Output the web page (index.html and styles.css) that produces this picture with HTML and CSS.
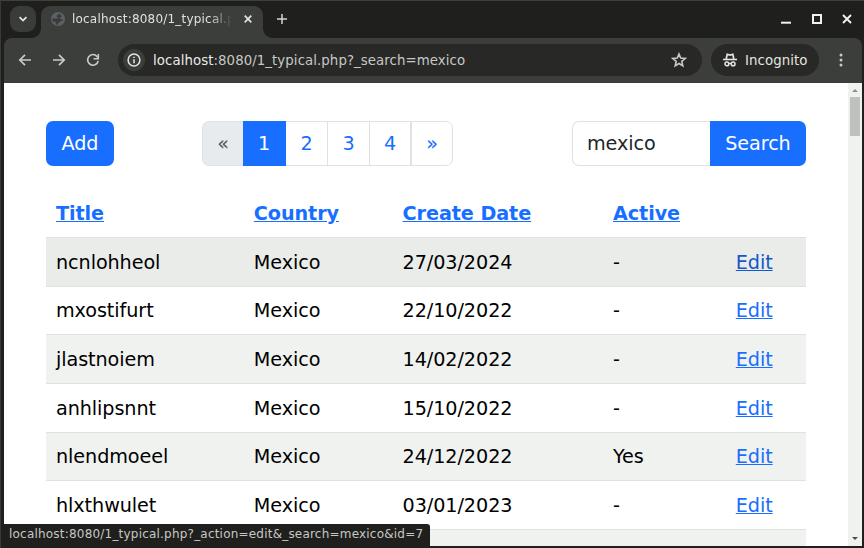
FILE: index.html
```html
<!DOCTYPE html>
<html lang="en">
<head>
<meta charset="utf-8">
<title>localhost:8080/1_typical.php</title>
<link rel="stylesheet" href="styles.css">
</head>
<body>
<div class="window">
  <header class="tabstrip">
    <button class="tab-search" aria-label="Search tabs"><svg width="10" height="10" viewBox="0 0 10 10"><path d="M1.600 3.200 5 6.600 8.400 3.200" fill="none" stroke="#e3e5e1" stroke-width="1.800"/></svg></button>
    <div class="tab">
      <svg class="globe" width="14" height="14" viewBox="0 0 14 14"><circle cx="7" cy="7" r="7" fill="#5c6166"/><path d="M8 1.400C7.200 3 5.700 2.800 5.500 4.400c1.200.5 1.500 1.200 1.100 2H1.400c-.2 1.200.1 2.400.7 3.400h2.700v2.500c.8.400 1.700.5 2.500.3V10.400h1.800V8.900h2.500V7.500l-1.300-.5H9V5.200h1.500V3.500z" fill="#393c39"/></svg>
      <span class="tab-title">localhost:8080/1_typical.p</span>
      <svg class="tab-close" width="8" height="8" viewBox="0 0 8 8"><path d="m.7.7 6.600 6.600M7.300.7.7 7.300" stroke="#e3e5e1" stroke-width="1.700"/></svg>
    </div>
    <svg class="new-tab" width="10" height="10" viewBox="0 0 10 10"><path d="M5 0v10M0 5h10" stroke="#d5d7d3" stroke-width="1.500"/></svg>
    <div class="controls">
      <svg width="10" height="10" viewBox="0 0 10 10"><path d="M0 8.700h10" stroke="#f0f2ee" stroke-width="2"/></svg>
      <svg width="10" height="10" viewBox="0 0 10 10"><path d="M1 1h8v8H1z" fill="none" stroke="#f0f2ee" stroke-width="2"/></svg>
      <svg width="10" height="10" viewBox="0 0 10 10"><path d="m1 1 8 8M9 1 1 9" stroke="#f0f2ee" stroke-width="1.900"/></svg>
    </div>
  </header>
  <nav class="toolbar">
    <svg class="nav-icon" width="14" height="14" viewBox="0 0 14 14"><path d="M13 7H2M7 1.800 1.800 7 7 12.200" fill="none" stroke="#c8cac6" stroke-width="1.700"/></svg>
    <svg class="nav-icon" width="14" height="14" viewBox="0 0 14 14"><path d="M1 7h11M7 1.800 12.200 7 7 12.200" fill="none" stroke="#c8cac6" stroke-width="1.700"/></svg>
    <svg class="nav-icon" width="14" height="14" viewBox="0 0 14 14"><path d="M12.200 7.800A5.300 5.300 0 1 1 11 3.400L12 4.600" fill="none" stroke="#c8cac6" stroke-width="1.600"/><path d="M12.300 1v4.800H7.600" fill="none" stroke="#c8cac6" stroke-width="1.600"/></svg>
    <div class="omnibox">
      <span class="info"><svg width="14" height="14" viewBox="0 0 14 14"><circle cx="7" cy="7" r="5.900" fill="none" stroke="#e3e5e1" stroke-width="1.500"/><path d="M7 6.200v4M7 3.700v1.400" stroke="#e3e5e1" stroke-width="1.500"/></svg></span>
      <span class="url"><b>localhost</b>:8080/1_typical.php?_search=mexico</span>
      <svg class="star" width="16" height="16" viewBox="0 0 16 16"><path d="m8 2 1.700 4.100 4.500.4-3.400 2.900 1 4.400L8 11.500l-3.800 2.300 1-4.400-3.400-2.900 4.500-.4z" fill="none" stroke="#c8cac6" stroke-width="1.600"/></svg>
    </div>
    <div class="incognito">
      <svg width="14" height="14" viewBox="0 0 14 14"><path d="M0 6.500h14" stroke="#e3e5e1" stroke-width="1.600"/><path d="M3.200 6 4.200 1.300 7 2l2.800-.7 1 4.700" fill="none" stroke="#e3e5e1" stroke-width="1.700"/><circle cx="3.900" cy="10.900" r="1.900" fill="none" stroke="#e3e5e1" stroke-width="1.500"/><circle cx="10.100" cy="10.900" r="1.900" fill="none" stroke="#e3e5e1" stroke-width="1.500"/><path d="M5.600 10.700q1.400-.7 2.800 0" fill="none" stroke="#e3e5e1" stroke-width="1.300"/></svg>
      <span>Incognito</span>
    </div>
    <svg class="menu" width="4" height="14" viewBox="0 0 4 14"><g fill="#c8cac6"><circle cx="2" cy="2" r="1.500"/><circle cx="2" cy="7" r="1.500"/><circle cx="2" cy="12" r="1.500"/></g></svg>
  </nav>
  <div class="viewport">
    <main class="page">
      <div class="actions">
        <a class="btn add">Add</a>
        <div class="pagination"><span class="disabled">«</span><a class="active">1</a><a>2</a><a>3</a><a class="last">4</a><a class="next">»</a></div>
        <form class="search"><input type="text" value="mexico" aria-label="Search"><button type="button" class="btn">Search</button></form>
      </div>
      <div class="table">
        <div class="row head"><a>Title</a><a>Country</a><a>Create Date</a><a>Active</a><span></span></div>
        <div class="row hover"><span>ncnlohheol</span><span>Mexico</span><span>27/03/2024</span><span>-</span><a>Edit</a></div>
        <div class="row"><span>mxostifurt</span><span>Mexico</span><span>22/10/2022</span><span>-</span><a>Edit</a></div>
        <div class="row odd"><span>jlastnoiem</span><span>Mexico</span><span>14/02/2022</span><span>-</span><a>Edit</a></div>
        <div class="row"><span>anhlipsnnt</span><span>Mexico</span><span>15/10/2022</span><span>-</span><a>Edit</a></div>
        <div class="row odd"><span>nlendmoeel</span><span>Mexico</span><span>24/12/2022</span><span>Yes</span><a>Edit</a></div>
        <div class="row"><span>hlxthwulet</span><span>Mexico</span><span>03/01/2023</span><span>-</span><a>Edit</a></div>
        <div class="row odd"></div>
      </div>
    </main>
    <div class="scrollbar">
      <svg width="6" height="3" viewBox="0 0 6 3"><path d="M0 3 3 0l3 3z" fill="#8d908d"/></svg>
      <div class="thumb"></div>
      <svg class="down" width="6" height="3" viewBox="0 0 6 3"><path d="M0 0h6L3 3z" fill="#4b4d4b"/></svg>
    </div>
    <div class="status">localhost:8080/1_typical.php?_action=edit&amp;_search=mexico&amp;id=7</div>
  </div>
</div>
</body>
</html>
```
FILE: styles.css
```css
* { box-sizing: border-box; }
body { margin: 0; overflow: hidden; font-family: "DejaVu Sans", sans-serif; }
svg { display: block; flex: none; }
button, input { font: inherit; letter-spacing: inherit; border: 0; margin: 0; }
.window {
  width: 864px; height: 548px; display: flex; flex-direction: column;
  background: #1f1f1d; border-top: 1px solid #3e403e; border-left: 1px solid #383a38;
  padding: 0 2px 2px 3px;
}
.tabstrip { height: 37px; flex: none; display: flex; padding: 5px 10px 0 6px; }
.tab-search {
  width: 26px; height: 26px; border-radius: 9px; background: #393c39; padding: 0;
  display: flex; align-items: center; justify-content: center;
}
.tab {
  position: relative; width: 222px; height: 32px; margin-left: 5px; padding: 0 11px 6px 10px;
  background: #3c3e3c; border-radius: 9px 9px 0 0; display: flex; align-items: center;
}
.tab::before, .tab::after {
  content: ""; position: absolute; bottom: 0; width: 9px; height: 9px;
}
.tab::before { left: -9px; background: radial-gradient(circle at 0 0, transparent 8.500px, #3c3e3c 9px); }
.tab::after { right: -9px; background: radial-gradient(circle at 100% 0, transparent 8.500px, #3c3e3c 9px); }
.tab-title {
  width: 166px; margin-left: 7px; white-space: nowrap; font-size: 12px; letter-spacing: .2px; color: #dfe1dd;
  mask-image: linear-gradient(to right, #000 138px, transparent 160px);
}
.tab-close { margin-left: auto; }
.new-tab { margin: 8px 0 0 14px; }
.controls { margin: 8px 0 0 auto; display: flex; gap: 20.500px; }
.toolbar {
  height: 45px; flex: none; display: flex; align-items: center; background: #3c3e3c;
  border-radius: 8px 8px 0 0; padding: 0 19px 1px 14px; color: #e3e5e1;
}
.nav-icon { margin-right: 20px; }
.omnibox {
  width: 584px; height: 32px; border-radius: 16px; background: #282826; margin-left: -2px;
  display: flex; align-items: center; padding: 0 15px 0 5px;
}
.info {
  width: 22px; height: 22px; border-radius: 50%; background: #3c3e3c;
  display: flex; align-items: center; justify-content: center;
}
.url { margin-left: 8px; font-size: 13.330px; letter-spacing: .07px; color: #c6c8c4; white-space: nowrap; }
.url b { font-weight: 400; color: #e8eae6; }
.star { margin-left: auto; }
.incognito {
  width: 108px; height: 32px; margin-left: 9px; border-radius: 16px; background: #282826;
  display: flex; align-items: center; padding-left: 12px; gap: 8px; font-size: 13.330px; letter-spacing: .07px;
}
.menu { margin-left: auto; }
.viewport { position: relative; flex: 1; min-height: 0; display: flex; background: #fff; overflow: hidden; }
.page { flex: 1; padding: 38px 42px 0; font-size: 19.200px; letter-spacing: -.08px; line-height: 28.800px; color: #000; }
.actions { display: flex; height: 45px; justify-content: space-between; }
.btn {
  background: #186eff; color: #fff; display: flex; align-items: center; justify-content: center;
  border-radius: 7px; padding: 2px 0 0;
}
.add { width: 68px; }
.pagination { display: flex; width: 251px; margin-left: -31px; color: #186eff; border-radius: 7px; }
.pagination > * {
  flex: none; width: 42px; border: solid #dee2e4; border-width: 1px 1px 1px 0; padding-top: 2px;
  display: flex; align-items: center; justify-content: center;
}
.pagination .disabled { width: 41px; background: #e8ebed; color: #55595b; border-width: 1px 0 1px 1px; border-radius: 7px 0 0 7px; }
.pagination .active { width: 43px; background: #186eff; border-color: #186eff; color: #fff; }
.pagination .last { width: 41px; }
.pagination .next { border-left-width: 1px; border-radius: 0 7px 7px 0; }
.search { width: 234px; display: flex; }
.search input {
  width: 138px; border: 1px solid #dee2e4; border-right: 0; border-radius: 7px 0 0 7px;
  padding: 2px 14px 0; color: #212528; outline: 0;
}
.search .btn { width: 96px; border-radius: 0 7px 7px 0; }
.table { margin-top: 23px; }
.row {
  height: 48.700px; display: grid; grid-template-columns: 197.800px 148.800px 210.400px 122.800px 1fr;
  align-items: center; padding: 2.600px 0 0 10px; border-bottom: 1px solid #dee2e4;
}
.row a { color: #186eff; text-decoration: underline; justify-self: start; }
.row.head { font-weight: 700; height: 49px; padding-top: 2px; }
.row.odd { background: #f0f2ef; }
.row.hover { background: #eaece9; }
.row.hover a { color: #1358cc; }
.scrollbar { width: 14px; background: #f0f2ef; display: flex; flex-direction: column; align-items: center; padding: 6px 0; }
.thumb { width: 10px; height: 39px; margin-top: 5px; background: #bfc1be; }
.down { margin-top: auto; }
.status {
  position: absolute; left: 0; bottom: 0; width: 426px; height: 22px; padding-left: 5px;
  background: #1f1f1d; border-radius: 0 3px 0 0; color: #c6c8c4; font-size: 12px; letter-spacing: .205px; line-height: 20px; white-space: nowrap;
}
```
